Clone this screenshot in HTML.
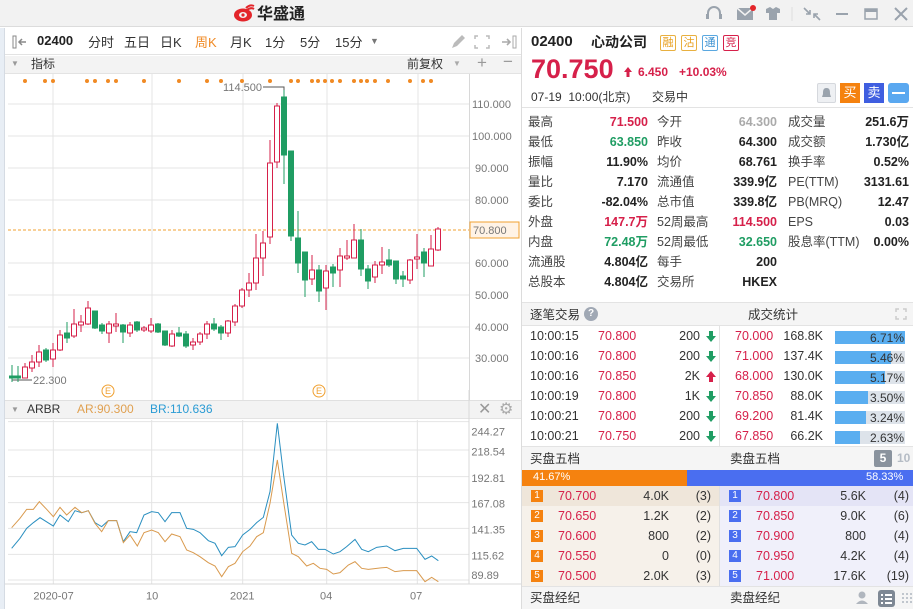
<!DOCTYPE html>
<html><head><meta charset="utf-8">
<style>
*{margin:0;padding:0;box-sizing:border-box}
body{width:913px;height:609px;overflow:hidden;background:#fff;font-family:"Liberation Sans","Noto Sans CJK SC",sans-serif;font-size:12px;color:#333;position:relative}
.a{position:absolute;white-space:nowrap}
.r{text-align:right}
.red{color:#d6204a}.grn{color:#1f9d63}
.b{font-weight:bold}
</style></head><body>
<!-- title bar -->
<div class="a" style="left:0;top:0;width:913px;height:27px;background:#f2f2f2;border-bottom:1px solid #dcdcdc"></div>
<div class="a" style="left:233px;top:3px;width:22px;height:20px">
<svg width="22" height="20" viewBox="0 0 22 20"><ellipse cx="10" cy="12" rx="9" ry="6.5" fill="#e3252a"/><ellipse cx="10" cy="12" rx="4" ry="3" fill="#f2f2f2"/><circle cx="10" cy="12" r="1.6" fill="#e3252a"/><path d="M13 5 Q17 1 21 3 M14 7 Q18 4 21 6" stroke="#e3252a" stroke-width="2" fill="none"/></svg></div>
<div class="a b" style="left:257px;top:0px;font-size:16px;color:#222">华盛通</div>
<svg class="a" style="left:700px;top:3px" width="213" height="22" viewBox="0 0 213 22">
<g stroke="#9aa3ad" stroke-width="2" fill="none"><path d="M8 14 V10 A6 6 0 0 1 20 10 V14"/></g>
<rect x="6" y="11" width="3" height="5" fill="#9aa3ad"/><rect x="19" y="11" width="3" height="5" fill="#9aa3ad"/>
<rect x="37" y="5" width="16" height="12" fill="#9aa3ad"/><path d="M37 5 L45 12 L53 5" stroke="#f2f2f2" stroke-width="1.5" fill="none"/><circle cx="53" cy="5" r="3" fill="#e3252a"/>
<path d="M66 6 L70 4 L73 6 L76 4 L80 6 L80 10 L77 10 L77 17 L69 17 L69 10 L66 10 Z" fill="#9aa3ad"/>
<line x1="92" y1="4" x2="92" y2="18" stroke="#ddd"/>
<path d="M104 5 L110 11 M110 7 V11 H106 M120 17 L114 11 M114 15 V11 H118" stroke="#9aa3ad" stroke-width="1.6" fill="none"/>
<line x1="136" y1="11" x2="148" y2="11" stroke="#9aa3ad" stroke-width="2"/>
<rect x="165" y="6" width="12" height="10" stroke="#9aa3ad" stroke-width="1.5" fill="none"/><rect x="165" y="6" width="12" height="3" fill="#9aa3ad"/>
<path d="M195 5 L207 17 M207 5 L195 17" stroke="#9aa3ad" stroke-width="2"/>
</svg>
<!-- left strip -->
<div class="a" style="left:0;top:28px;width:5px;height:581px;background:#e8eef5;border-right:1px solid #d5dbe3"></div>
<!-- toolbar -->
<div class="a" style="left:5px;top:28px;width:516px;height:27px;background:#fff;border-bottom:1px solid #e3e3e3"></div>
<svg class="a" style="left:12px;top:35px" width="20" height="14"><rect x="1" y="1" width="3" height="12" stroke="#888" fill="none"/><path d="M14 7 H7 M10 4 L7 7 L10 10" stroke="#888" stroke-width="1.5" fill="none"/></svg>
<div class="a b" style="left:37px;top:33px;font-size:13px;color:#222">02400</div>
<div class="a" style="left:88px;top:32px;font-size:13px">分时</div>
<div class="a" style="left:124px;top:32px;font-size:13px">五日</div>
<div class="a" style="left:160px;top:32px;font-size:13px">日K</div>
<div class="a" style="left:195px;top:32px;font-size:13px;color:#f08a24">周K</div>
<div class="a" style="left:230px;top:32px;font-size:13px">月K</div>
<div class="a" style="left:265px;top:32px;font-size:13px">1分</div>
<div class="a" style="left:300px;top:32px;font-size:13px">5分</div>
<div class="a" style="left:335px;top:32px;font-size:13px">15分</div>
<div class="a" style="left:370px;top:36px;font-size:9px;color:#777">▼</div>
<svg class="a" style="left:450px;top:34px" width="70" height="16"><path d="M2 14 L4 9 L12 1 L15 4 L7 12 Z" fill="#bbb"/><path d="M28 2 H25 V5 M36 2 H39 V5 M28 14 H25 V11 M36 14 H39 V11" stroke="#bbb" stroke-width="1.5" fill="none"/><path d="M52 8 H60 M57 5 L60 8 L57 11" stroke="#aaa" stroke-width="1.6" fill="none"/><rect x="63" y="2" width="3" height="12" stroke="#aaa" fill="none"/></svg>
<!-- indicator bar -->
<div class="a" style="left:5px;top:56px;width:516px;height:18px;background:#f3f3f3;border-bottom:1px solid #e3e3e3"></div>
<div class="a" style="left:11px;top:59px;font-size:8px;color:#999">▼</div>
<div class="a" style="left:31px;top:55px;font-size:12px">指标</div>
<div class="a" style="left:407px;top:55px;font-size:12px">前复权</div>
<div class="a" style="left:453px;top:59px;font-size:8px;color:#aaa">▼</div>
<div class="a" style="left:477px;top:53px;font-size:17px;color:#999">+</div>
<div class="a" style="left:503px;top:52px;font-size:17px;color:#999">−</div>
<!-- main chart -->
<svg class="a" style="left:0;top:74px" width="522" height="326" viewBox="0 74 522 326">
<g stroke="#e4e4e4" stroke-width="1">
<line x1="8" y1="104" x2="469" y2="104"/><line x1="8" y1="136" x2="469" y2="136"/><line x1="8" y1="168" x2="469" y2="168"/><line x1="8" y1="200" x2="469" y2="200"/><line x1="8" y1="263" x2="469" y2="263"/><line x1="8" y1="295" x2="469" y2="295"/><line x1="8" y1="327" x2="469" y2="327"/><line x1="8" y1="358" x2="469" y2="358"/>
<line x1="53" y1="74" x2="53" y2="400"/><line x1="152" y1="74" x2="152" y2="400"/><line x1="243" y1="74" x2="243" y2="400"/><line x1="327" y1="74" x2="327" y2="400"/><line x1="418" y1="74" x2="418" y2="400"/>
<line x1="469.5" y1="74" x2="469.5" y2="400" stroke="#d8d8d8"/>
</g>
<g fill="#f08a24">
<circle cx="25" cy="81" r="2"/><circle cx="45" cy="81" r="2"/><circle cx="53" cy="81" r="2"/><circle cx="87" cy="81" r="2"/><circle cx="95" cy="81" r="2"/><circle cx="108" cy="81" r="2"/><circle cx="116" cy="81" r="2"/><circle cx="144" cy="81" r="2"/><circle cx="179" cy="81" r="2"/><circle cx="207" cy="81" r="2"/><circle cx="221" cy="81" r="2"/><circle cx="242" cy="81" r="2"/><circle cx="270" cy="81" r="2"/><circle cx="291" cy="81" r="2"/><circle cx="298" cy="81" r="2"/><circle cx="312" cy="81" r="2"/><circle cx="318" cy="81" r="2"/><circle cx="325" cy="81" r="2"/><circle cx="332" cy="81" r="2"/><circle cx="340" cy="81" r="2"/><circle cx="354" cy="81" r="2"/><circle cx="361" cy="81" r="2"/><circle cx="367" cy="81" r="2"/><circle cx="375" cy="81" r="2"/><circle cx="388" cy="81" r="2"/><circle cx="410" cy="81" r="2"/><circle cx="423" cy="81" r="2"/><circle cx="431" cy="81" r="2"/>
</g>
<line x1="8" y1="230" x2="469" y2="230" stroke="#f0a030" stroke-dasharray="3,2"/>
<g font-family="Liberation Sans,sans-serif" font-size="11" fill="#777">
<text x="472" y="108">110.000</text><text x="472" y="140">100.000</text><text x="475" y="172">90.000</text><text x="475" y="204">80.000</text><text x="475" y="267">60.000</text><text x="475" y="299">50.000</text><text x="475" y="331">40.000</text><text x="475" y="362">30.000</text>
<text x="262" y="91" text-anchor="end">114.500</text><text x="33" y="384">22.300</text>
</g>
<path d="M263 87 H284 V91" stroke="#555" fill="none"/><line x1="12" y1="380" x2="32" y2="380" stroke="#555"/>
<rect x="470" y="222" width="49" height="16" fill="#fff3e6" stroke="#f0a030"/>
<text x="473" y="234" font-family="Liberation Sans,sans-serif" font-size="11" fill="#777">70.800</text>
<g fill="none" stroke="#f0a030"><circle cx="108" cy="391" r="6"/><circle cx="319" cy="391" r="6"/></g>
<g font-family="Liberation Sans,sans-serif" font-size="9" fill="#f0a030"><text x="105" y="394">E</text><text x="316" y="394">E</text></g>
<g id="c">
<g stroke="#1f9d63" fill="#1f9d63">
<line x1="12" y1="365" x2="12" y2="382"/><rect x="9.5" y="376" width="5" height="2"/>
<line x1="18" y1="366" x2="18" y2="382"/><rect x="15.5" y="376" width="5" height="2"/>
<line x1="46" y1="348" x2="46" y2="362"/><rect x="43.5" y="350" width="5" height="10"/>
<line x1="67" y1="322" x2="67" y2="343"/><rect x="64.5" y="333" width="5" height="5"/>
<line x1="95" y1="311" x2="95" y2="329"/><rect x="92.5" y="311" width="5" height="17"/>
<line x1="102" y1="323" x2="102" y2="334"/><rect x="99.5" y="325" width="5" height="6"/>
<line x1="123" y1="324" x2="123" y2="343"/><rect x="120.5" y="325" width="5" height="7"/>
<line x1="137" y1="321" x2="137" y2="332"/><rect x="134.5" y="322" width="5" height="8"/>
<line x1="158" y1="323" x2="158" y2="333"/><rect x="155.5" y="324" width="5" height="8"/>
<line x1="165" y1="331" x2="165" y2="346"/><rect x="162.5" y="331" width="5" height="14"/>
<line x1="179" y1="327" x2="179" y2="337"/><rect x="176.5" y="333" width="5" height="3"/>
<line x1="186" y1="331" x2="186" y2="348"/><rect x="183.5" y="334" width="5" height="12"/>
<line x1="214" y1="318" x2="214" y2="331"/><rect x="211.5" y="324" width="5" height="5"/>
<line x1="221" y1="325" x2="221" y2="340"/><rect x="218.5" y="327" width="5" height="6"/>
<line x1="284" y1="90" x2="284" y2="184"/><rect x="281.5" y="97" width="5" height="58"/>
<line x1="291" y1="151" x2="291" y2="241"/><rect x="288.5" y="151" width="5" height="85"/>
<line x1="298" y1="211" x2="298" y2="273"/><rect x="295.5" y="238" width="5" height="25"/>
<line x1="305" y1="252" x2="305" y2="297"/><rect x="302.5" y="252" width="5" height="28"/>
<line x1="319" y1="265" x2="319" y2="302"/><rect x="316.5" y="270" width="5" height="21"/>
<line x1="333" y1="264" x2="333" y2="287"/><rect x="330.5" y="267" width="5" height="6"/>
<line x1="361" y1="229" x2="361" y2="276"/><rect x="358.5" y="240" width="5" height="29"/>
<line x1="368" y1="265" x2="368" y2="289"/><rect x="365.5" y="269" width="5" height="12"/>
<line x1="389" y1="249" x2="389" y2="267"/><rect x="386.5" y="260" width="5" height="5"/>
<line x1="396" y1="261" x2="396" y2="284"/><rect x="393.5" y="261" width="5" height="18"/>
<line x1="403" y1="271" x2="403" y2="287"/><rect x="400.5" y="276" width="5" height="3"/>
<line x1="424" y1="248" x2="424" y2="277"/><rect x="421.5" y="252" width="5" height="11"/>
</g>
<g stroke="#d6204a" fill="#fff">
<line x1="25" y1="363" x2="25" y2="378"/><rect x="22.5" y="367" width="5" height="11"/>
<line x1="32" y1="355" x2="32" y2="372"/><rect x="29.5" y="362" width="5" height="6"/>
<line x1="39" y1="345" x2="39" y2="367"/><rect x="36.5" y="352" width="5" height="10"/>
<line x1="53" y1="343" x2="53" y2="367"/><rect x="50.5" y="350" width="5" height="9"/>
<line x1="60" y1="330" x2="60" y2="351"/><rect x="57.5" y="335" width="5" height="15"/>
<line x1="74" y1="309" x2="74" y2="338"/><rect x="71.5" y="324" width="5" height="12"/>
<line x1="81" y1="315" x2="81" y2="332"/><rect x="78.5" y="322" width="5" height="3"/>
<line x1="88" y1="301" x2="88" y2="325"/><rect x="85.5" y="308" width="5" height="16"/>
<line x1="109" y1="321" x2="109" y2="343"/><rect x="106.5" y="324" width="5" height="9"/>
<line x1="116" y1="313" x2="116" y2="332"/><rect x="113.5" y="324" width="5" height="2"/>
<line x1="130" y1="322" x2="130" y2="337"/><rect x="127.5" y="325" width="5" height="8"/>
<line x1="144" y1="326" x2="144" y2="332"/><rect x="141.5" y="328" width="5" height="2"/>
<line x1="151" y1="318" x2="151" y2="333"/><rect x="148.5" y="325" width="5" height="6"/>
<line x1="172" y1="330" x2="172" y2="347"/><rect x="169.5" y="334" width="5" height="12"/>
<line x1="193" y1="338" x2="193" y2="350"/><rect x="190.5" y="342" width="5" height="3"/>
<line x1="200" y1="332" x2="200" y2="345"/><rect x="197.5" y="334" width="5" height="8"/>
<line x1="207" y1="321" x2="207" y2="339"/><rect x="204.5" y="324" width="5" height="10"/>
<line x1="228" y1="320" x2="228" y2="337"/><rect x="225.5" y="321" width="5" height="12"/>
<line x1="235" y1="304" x2="235" y2="326"/><rect x="232.5" y="306" width="5" height="16"/>
<line x1="242" y1="288" x2="242" y2="308"/><rect x="239.5" y="290" width="5" height="16"/>
<line x1="249" y1="273" x2="249" y2="297"/><rect x="246.5" y="283" width="5" height="7"/>
<line x1="256" y1="234" x2="256" y2="290"/><rect x="253.5" y="258" width="5" height="25"/>
<line x1="263" y1="231" x2="263" y2="276"/><rect x="260.5" y="243" width="5" height="15"/>
<line x1="270" y1="140" x2="270" y2="244"/><rect x="267.5" y="163" width="5" height="74"/>
<line x1="277" y1="103" x2="277" y2="168"/><rect x="274.5" y="106" width="5" height="56"/>
<line x1="312" y1="255" x2="312" y2="285"/><rect x="309.5" y="270" width="5" height="9"/>
<line x1="326" y1="265" x2="326" y2="310"/><rect x="323.5" y="271" width="5" height="17"/>
<line x1="340" y1="248" x2="340" y2="287"/><rect x="337.5" y="256" width="5" height="14"/>
<line x1="347" y1="240" x2="347" y2="260"/><rect x="344.5" y="256" width="5" height="2"/>
<line x1="354" y1="224" x2="354" y2="258"/><rect x="351.5" y="240" width="5" height="18"/>
<line x1="375" y1="261" x2="375" y2="283"/><rect x="372.5" y="265" width="5" height="12"/>
<line x1="382" y1="247" x2="382" y2="274"/><rect x="379.5" y="262" width="5" height="3"/>
<line x1="410" y1="259" x2="410" y2="284"/><rect x="407.5" y="260" width="5" height="20"/>
<line x1="417" y1="234" x2="417" y2="269"/><rect x="414.5" y="257" width="5" height="2"/>
<line x1="431" y1="235" x2="431" y2="266"/><rect x="428.5" y="249" width="5" height="17"/>
<line x1="438" y1="227" x2="438" y2="251"/><rect x="435.5" y="229" width="5" height="21"/>
</g></g>
</svg>
<!-- ARBR header -->
<div class="a" style="left:5px;top:400px;width:516px;height:19px;background:#f3f3f3;border-top:1px solid #e0e0e0;border-bottom:1px solid #e3e3e3"></div>
<div class="a" style="left:11px;top:405px;font-size:8px;color:#999">▼</div>
<div class="a" style="left:27px;top:402px;font-size:12px;color:#333">ARBR</div>
<div class="a" style="left:77px;top:402px;font-size:12px;color:#e0a050">AR:90.300</div>
<div class="a" style="left:150px;top:402px;font-size:12px;color:#2a9bd4">BR:110.636</div>
<div class="a" style="left:478px;top:399px;font-size:16px;color:#999">✕</div>
<div class="a" style="left:499px;top:399px;font-size:16px;color:#aaa">⚙</div>
<svg class="a" style="left:0;top:390px" width="522" height="219" viewBox="0 0 1566 657">
<g stroke="#e4e4e4" stroke-width="3">
<line x1="24" y1="95" x2="1407" y2="95"/><line x1="24" y1="180" x2="1407" y2="180"/><line x1="24" y1="260" x2="1407" y2="260"/><line x1="24" y1="338" x2="1407" y2="338"/><line x1="24" y1="415" x2="1407" y2="415"/><line x1="24" y1="493" x2="1407" y2="493"/><line x1="24" y1="570" x2="1407" y2="570"/>
<line x1="160" y1="90" x2="160" y2="582"/><line x1="455" y1="90" x2="455" y2="582"/><line x1="728" y1="90" x2="728" y2="582"/><line x1="980" y1="90" x2="980" y2="582"/><line x1="1252" y1="90" x2="1252" y2="582"/>
<line x1="1407" y1="0" x2="1407" y2="582" stroke="#d8d8d8"/>
<line x1="15" y1="582" x2="1566" y2="582" stroke="#d8d8d8"/>
</g>
<polyline fill="none" stroke="#2a8fc0" stroke-width="3" points="35,475 60,445 80,415 100,398 120,383 160,408 180,375 205,395 225,362 245,368 265,362 285,398 305,410 325,392 350,392 370,455 390,425 410,428 432,375 455,365 475,368 495,395 515,368 540,368 560,415 580,418 600,428 625,452 645,460 665,497 685,472 705,470 728,435 750,418 770,398 790,382 810,305 832,100 850,250 875,435 895,460 915,465 935,455 955,478 975,478 1000,492 1020,485 1040,470 1065,448 1085,478 1105,485 1130,472 1160,468 1185,482 1210,475 1250,475 1275,508 1295,498 1315,512"/>
<polyline fill="none" stroke="#d99a4e" stroke-width="3" points="35,413 60,385 80,358 100,358 118,335 140,358 160,380 180,352 200,375 225,352 245,368 265,362 285,400 305,425 325,392 350,392 370,458 390,435 412,468 432,428 455,420 475,428 495,455 515,432 540,440 560,480 580,488 600,500 625,518 645,528 665,560 685,530 705,520 728,485 750,468 770,440 790,428 810,340 832,210 850,330 875,490 895,500 920,528 940,520 960,535 980,538 1000,552 1020,548 1045,525 1065,515 1085,535 1105,538 1130,535 1160,532 1185,545 1210,542 1250,542 1275,575 1295,562 1315,575"/>
<g font-family="Liberation Sans,sans-serif" font-size="33" fill="#777">
<text x="1414" y="136">244.27</text><text x="1414" y="197">218.54</text><text x="1414" y="276">192.81</text><text x="1414" y="353">167.08</text><text x="1414" y="431">141.35</text><text x="1414" y="509">115.62</text><text x="1414" y="567">89.89</text>
<text x="100" y="628">2020-07</text><text x="438" y="628">10</text><text x="690" y="628">2021</text><text x="960" y="628">04</text><text x="1230" y="628">07</text>
</g>
</svg>
<!-- right panel -->
<div class="a" style="left:521px;top:28px;width:1px;height:581px;background:#dcdcdc"></div>
<div class="a b" style="left:531px;top:33px;font-size:15px;color:#222">02400</div>
<div class="a b" style="left:591px;top:32px;font-size:14px;color:#222">心动公司</div>
<div class="a" style="left:660px;top:35px;width:16px;height:16px;border:1px solid #e8b040;color:#e8a020;font-size:11px;text-align:center;line-height:14px;border-radius:2px">融</div>
<div class="a" style="left:681px;top:35px;width:16px;height:16px;border:1px solid #e8b040;color:#e8a020;font-size:11px;text-align:center;line-height:14px;border-radius:2px">沽</div>
<div class="a" style="left:702px;top:35px;width:16px;height:16px;border:1px solid #5aa8e0;color:#3a90d0;font-size:11px;text-align:center;line-height:14px;border-radius:2px">通</div>
<div class="a" style="left:723px;top:35px;width:16px;height:16px;border:1px solid #d6204a;color:#d6204a;font-size:11px;text-align:center;line-height:14px;border-radius:2px">竞</div>
<div class="a b red" style="left:531px;top:54px;font-size:27px">70.750</div>
<svg class="a" style="left:623px;top:66px" width="10" height="12"><path d="M5 1 L9 6 H6.5 V11 H3.5 V6 H1 Z" fill="#d6204a"/></svg>
<div class="a b red" style="left:638px;top:65px;font-size:12px">6.450</div>
<div class="a b red" style="left:679px;top:65px;font-size:12px">+10.03%</div>
<div class="a" style="left:531px;top:88px;font-size:12px">07-19&nbsp; 10:00(北京)</div>
<div class="a" style="left:652px;top:88px;font-size:12px">交易中</div>
<div class="a" style="left:817px;top:83px;width:19px;height:20px;background:#eef0f3;border:1px solid #d5d8dd;border-radius:2px"><svg width="17" height="18"><path d="M8.5 4 C5 4 5 7 5 10 L4 13 H13 L12 10 C12 7 12 4 8.5 4Z" fill="#9aa3ad"/></svg></div>
<div class="a" style="left:840px;top:83px;width:20px;height:20px;background:#f5820f;color:#fff;font-size:13px;text-align:center;line-height:20px">买</div>
<div class="a" style="left:864px;top:83px;width:20px;height:20px;background:#3f5ee0;color:#fff;font-size:13px;text-align:center;line-height:20px">卖</div>
<div class="a" style="left:888px;top:83px;width:21px;height:20px;background:#5aa8f0;border-radius:3px"><div style="margin:9px 4px 0;height:2px;background:#fff"></div></div>
<div class="a" style="left:522px;top:107px;width:391px;height:1px;background:#e3e3e3"></div>
<!-- stats -->
<div class="a" style="left:528px;top:112px;line-height:20px;font-size:12.5px;color:#444">最高<br>最低<br>振幅<br>量比<br>委比<br>外盘<br>内盘<br>流通股<br>总股本</div>
<div class="a r b" style="left:560px;top:112px;width:88px;line-height:20px;font-size:12.5px;color:#222"><span class="red">71.500</span><br><span class="grn">63.850</span><br>11.90%<br>7.170<br>-82.04%<br><span class="red">147.7万</span><br><span class="grn">72.48万</span><br>4.804亿<br>4.804亿</div>
<div class="a" style="left:657px;top:112px;line-height:20px;font-size:12.5px;color:#444">今开<br>昨收<br>均价<br>流通值<br>总市值<br>52周最高<br>52周最低<br>每手<br>交易所</div>
<div class="a r b" style="left:690px;top:112px;width:87px;line-height:20px;font-size:12.5px;color:#222"><span style="color:#aaa">64.300</span><br>64.300<br>68.761<br>339.9亿<br>339.8亿<br><span class="red">114.500</span><br><span class="grn">32.650</span><br>200<br>HKEX</div>
<div class="a" style="left:788px;top:112px;line-height:20px;font-size:12.5px;color:#444">成交量<br>成交额<br>换手率<br>PE(TTM)<br>PB(MRQ)<br>EPS<br>股息率(TTM)</div>
<div class="a r b" style="left:840px;top:112px;width:69px;line-height:20px;font-size:12.5px;color:#222">251.6万<br>1.730亿<br>0.52%<br>3131.61<br>12.47<br>0.03<br>0.00%</div>
<!-- trades -->
<div class="a" style="left:522px;top:302px;width:391px;height:24px;background:#f5f5f5;border-top:1px solid #e3e3e3;border-bottom:1px solid #e3e3e3"></div>
<div class="a" style="left:530px;top:304px;font-size:12.5px">逐笔交易</div>
<div class="a" style="left:584px;top:307px;width:14px;height:14px;border-radius:7px;background:#a0a8b4;color:#fff;font-size:10px;text-align:center;line-height:14px;font-weight:bold">?</div>
<div class="a" style="left:748px;top:304px;font-size:12.5px">成交统计</div>
<svg class="a" style="left:895px;top:308px" width="12" height="12"><path d="M1 4 V1 H4 M8 1 H11 V4 M1 8 V11 H4 M11 8 V11 H8" stroke="#ccc" stroke-width="1.5" fill="none"/></svg>
<div class="a" style="left:719px;top:326px;width:1px;height:120px;background:#e3e3e3"></div>
<div class="a" style="left:530px;top:326px;line-height:20px;font-size:12.5px;color:#333">10:00:15<br>10:00:16<br>10:00:16<br>10:00:19<br>10:00:21<br>10:00:21</div>
<div class="a red" style="left:598px;top:326px;line-height:20px;font-size:12.5px">70.800<br>70.800<br>70.850<br>70.800<br>70.800<br>70.750</div>
<div class="a r" style="left:650px;top:326px;width:50px;line-height:20px;font-size:12.5px">200<br>200<br>2K<br>1K<br>200<br>200</div>
<svg class="a" style="left:705px;top:327px" width="12" height="120">
<g fill="#1f9d63"><path d="M4 4 H8 V9 H11 L6 15 L1 9 H4Z"/><path d="M4 24 H8 V29 H11 L6 35 L1 29 H4Z"/><path d="M4 64 H8 V69 H11 L6 75 L1 69 H4Z"/><path d="M4 84 H8 V89 H11 L6 95 L1 89 H4Z"/><path d="M4 104 H8 V109 H11 L6 115 L1 109 H4Z"/></g>
<path d="M4 55 H8 V50 H11 L6 44 L1 50 H4Z" fill="#d6204a"/></svg>
<div class="a red" style="left:735px;top:326px;line-height:20px;font-size:12.5px">70.000<br>71.000<br>68.000<br>70.850<br>69.200<br>67.850</div>
<div class="a r" style="left:770px;top:326px;width:53px;line-height:20px;font-size:12.5px">168.8K<br>137.4K<br>130.0K<br>88.0K<br>81.4K<br>66.2K</div>
<div class="a" style="left:835px;top:331px;width:70px;height:13px;background:#dde3ea"><div style="width:70px;height:13px;background:#5aaef0"></div></div>
<div class="a" style="left:835px;top:351px;width:70px;height:13px;background:#dde3ea"><div style="width:56px;height:13px;background:#5aaef0"></div></div>
<div class="a" style="left:835px;top:371px;width:70px;height:13px;background:#dde3ea"><div style="width:50px;height:13px;background:#5aaef0"></div></div>
<div class="a" style="left:835px;top:391px;width:70px;height:13px;background:#dde3ea"><div style="width:33px;height:13px;background:#5aaef0"></div></div>
<div class="a" style="left:835px;top:411px;width:70px;height:13px;background:#dde3ea"><div style="width:31px;height:13px;background:#5aaef0"></div></div>
<div class="a" style="left:835px;top:431px;width:70px;height:13px;background:#dde3ea"><div style="width:25px;height:13px;background:#5aaef0"></div></div>
<div class="a r" style="left:850px;top:328px;width:54px;line-height:20px;font-size:12px;color:#333">6.71%<br>5.46%<br>5.17%<br>3.50%<br>3.24%<br>2.63%</div>
<!-- order book -->
<div class="a" style="left:522px;top:446px;width:391px;height:24px;background:#f5f5f5;border-top:1px solid #e3e3e3"></div>
<div class="a" style="left:530px;top:448px;font-size:12.5px">买盘五档</div>
<div class="a" style="left:730px;top:448px;font-size:12.5px">卖盘五档</div>
<div class="a b" style="left:874px;top:450px;width:18px;height:17px;background:#8a939e;color:#fff;font-size:12px;text-align:center;line-height:17px;border-radius:2px">5</div>
<div class="a b" style="left:897px;top:451px;font-size:12px;color:#b5bcc5">10</div>
<div class="a" style="left:522px;top:470px;width:165px;height:16px;background:#f5820f"></div>
<div class="a" style="left:687px;top:470px;width:226px;height:16px;background:#4a6ef0"></div>
<div class="a" style="left:533px;top:471px;font-size:11px;color:#fff">41.67%</div>
<div class="a" style="left:866px;top:471px;font-size:11px;color:#fff">58.33%</div>
<div class="a" style="left:522px;top:486px;width:197px;height:100px;background:#f6f1ea"></div>
<div class="a" style="left:522px;top:486px;width:197px;height:20px;background:#efe6da"></div>
<div class="a" style="left:720px;top:486px;width:193px;height:100px;background:#f0f0fa"></div>
<div class="a" style="left:720px;top:486px;width:193px;height:20px;background:#e4e4f6"></div>
<div class="a" style="left:719px;top:486px;width:1px;height:100px;background:#e0e0e0"></div>
<div class="a" style="left:531px;top:490px;width:12px;line-height:20px;font-size:10px;color:#fff">
<div style="background:#f5820f;height:12px;line-height:12px;text-align:center;margin-bottom:8px">1</div><div style="background:#f5820f;height:12px;line-height:12px;text-align:center;margin-bottom:8px">2</div><div style="background:#f5820f;height:12px;line-height:12px;text-align:center;margin-bottom:8px">3</div><div style="background:#f5820f;height:12px;line-height:12px;text-align:center;margin-bottom:8px">4</div><div style="background:#f5820f;height:12px;line-height:12px;text-align:center">5</div></div>
<div class="a" style="left:729px;top:490px;width:12px;line-height:20px;font-size:10px;color:#fff">
<div style="background:#4a6ef0;height:12px;line-height:12px;text-align:center;margin-bottom:8px">1</div><div style="background:#4a6ef0;height:12px;line-height:12px;text-align:center;margin-bottom:8px">2</div><div style="background:#4a6ef0;height:12px;line-height:12px;text-align:center;margin-bottom:8px">3</div><div style="background:#4a6ef0;height:12px;line-height:12px;text-align:center;margin-bottom:8px">4</div><div style="background:#4a6ef0;height:12px;line-height:12px;text-align:center">5</div></div>
<div class="a red" style="left:558px;top:486px;line-height:20px;font-size:12.5px">70.700<br>70.650<br>70.600<br>70.550<br>70.500</div>
<div class="a r" style="left:620px;top:486px;width:49px;line-height:20px;font-size:12.5px">4.0K<br>1.2K<br>800<br>0<br>2.0K</div>
<div class="a r" style="left:680px;top:486px;width:31px;line-height:20px;font-size:12.5px">(3)<br>(2)<br>(2)<br>(0)<br>(3)</div>
<div class="a red" style="left:756px;top:486px;line-height:20px;font-size:12.5px">70.800<br>70.850<br>70.900<br>70.950<br>71.000</div>
<div class="a r" style="left:815px;top:486px;width:51px;line-height:20px;font-size:12.5px">5.6K<br>9.0K<br>800<br>4.2K<br>17.6K</div>
<div class="a r" style="left:870px;top:486px;width:39px;line-height:20px;font-size:12.5px">(4)<br>(6)<br>(4)<br>(4)<br>(19)</div>
<div class="a" style="left:522px;top:586px;width:391px;height:23px;background:#f5f5f5;border-top:1px solid #e3e3e3"></div>
<div class="a" style="left:530px;top:587px;font-size:12.5px">买盘经纪</div>
<div class="a" style="left:730px;top:587px;font-size:12.5px">卖盘经纪</div>
<svg class="a" style="left:854px;top:589px" width="59" height="20"><circle cx="8" cy="6" r="3.5" fill="#b0b6be"/><path d="M2 15 Q8 8 14 15Z" fill="#b0b6be"/><rect x="24" y="1" width="17" height="17" rx="3" fill="#7e8894"/><g fill="#fff"><rect x="27" y="5" width="2" height="2"/><rect x="31" y="5" width="7" height="2"/><rect x="27" y="9" width="2" height="2"/><rect x="31" y="9" width="7" height="2"/><rect x="27" y="13" width="2" height="2"/><rect x="31" y="13" width="7" height="2"/></g><g fill="#c0c6cd"><rect x="48" y="4" width="2" height="2"/><rect x="52" y="4" width="2" height="2"/><rect x="56" y="4" width="2" height="2"/><rect x="48" y="8" width="2" height="2"/><rect x="52" y="8" width="2" height="2"/><rect x="56" y="8" width="2" height="2"/><rect x="48" y="12" width="2" height="2"/><rect x="52" y="12" width="2" height="2"/><rect x="56" y="12" width="2" height="2"/></g></svg>
</body></html>
